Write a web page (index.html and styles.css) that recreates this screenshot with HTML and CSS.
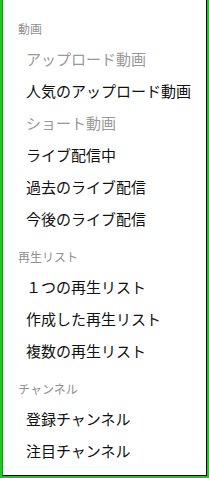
FILE: index.html
```html
<!DOCTYPE html>
<html lang="ja">
<head>
<meta charset="utf-8">
<link rel="stylesheet" href="styles.css">
</head>
<body>
<div class="frame">
  <div class="panel">
    <div class="section first">
      <div class="header">動画</div>
      <div class="item disabled">アップロード動画</div>
      <div class="item">人気のアップロード動画</div>
      <div class="item disabled">ショート動画</div>
      <div class="item">ライブ配信中</div>
      <div class="item">過去のライブ配信</div>
      <div class="item">今後のライブ配信</div>
    </div>
    <div class="section">
      <div class="header">再生リスト</div>
      <div class="item">１つの再生リスト</div>
      <div class="item">作成した再生リスト</div>
      <div class="item">複数の再生リスト</div>
    </div>
    <div class="section">
      <div class="header">チャンネル</div>
      <div class="item">登録チャンネル</div>
      <div class="item">注目チャンネル</div>
    </div>
  </div>
</div>
</body>
</html>
```
FILE: styles.css
```css
html, body {
  margin: 0;
  padding: 0;
  background: #fff;
}
body {
  font-family: "Noto Sans CJK JP", "Noto Sans", sans-serif;
}
.frame {
  width: 209px;
  height: 478px;
  box-sizing: border-box;
  border: 2px solid #1ec81e;
  border-top: none;
  background: #fff;
}
.panel {
  height: 100%;
  box-sizing: border-box;
  border-left: 1px solid #119911;
  border-right: 1px solid #000;
  border-bottom: 1px solid #000;
  padding-top: 13px;
}
.section {
  display: flex;
  flex-direction: column;
  margin-top: 4px;
}
.section.first {
  margin-top: 0;
}
.header {
  height: 32px;
  line-height: 32px;
  font-size: 12px;
  color: #909090;
  padding-left: 15px;
}
.item {
  height: 32px;
  box-sizing: border-box;
  line-height: 28px;
  padding-bottom: 4px;
  font-size: 15px;
  color: #111;
  padding-left: 23px;
  white-space: nowrap;
}
.item.disabled {
  color: #999;
}
```
